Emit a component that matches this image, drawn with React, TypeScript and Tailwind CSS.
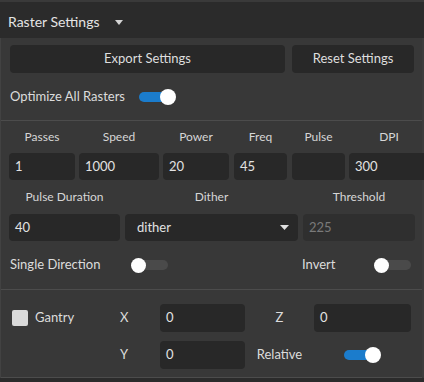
import React from "react";

function Toggle({ on }: { on: boolean }) {
  return (
    <div className="relative w-[37px] h-[16px] shrink-0">
      <div
        className={
          on
            ? "absolute left-0 right-[4px] top-[3px] h-[10px] rounded-full bg-[#1b7ccc]"
            : "absolute left-[3px] right-0 top-[3px] h-[10px] rounded-full bg-[#4a4a4a]"
        }
      />
      <div
        className={
          on
            ? "absolute right-0 top-0 w-[16px] h-[16px] rounded-full bg-white"
            : "absolute left-0 top-[0.5px] w-[15px] h-[15px] rounded-full bg-white"
        }
      />
    </div>
  );
}

function Field({ value, w, disabled }: { value: string; w: string; disabled?: boolean }) {
  return (
    <div
      className={
        "h-[27px] rounded-[4px] flex items-center px-[6px] text-[13px] shrink-0 " +
        w +
        (disabled ? " bg-[#2f2f2f] text-[#7a7a7a]" : " bg-[#282828] text-[#e2e2e2]")
      }
    >
      {value}
    </div>
  );
}

function Col({ label, value, w }: { label: string; value: string; w: string }) {
  return (
    <div className={"flex flex-col items-stretch shrink-0 " + w}>
      <div className="h-[16px] leading-[16px] text-center text-[12px] text-[#d6d6d6] mb-[8px] mt-[1px]">{label}</div>
      <Field value={value} w="w-full" />
    </div>
  );
}

export default function App() {
  return (
    <div
      className="w-[424px] h-[382px] overflow-hidden bg-[#2b2b2b] text-[#dcdcdc]"
      style={{ fontFamily: "Lato, 'Noto Sans', sans-serif" }}
    >
      {/* header */}
      <div className="h-[38px] border-t-2 border-[#3a3a3a] flex items-center pl-[8px] pt-[2px]">
        <span className="text-[14px] text-[#e4e4e4]">Raster Settings</span>
        <svg width="8" height="5" viewBox="0 0 8 5" className="ml-[15px] mt-[2px]">
          <polygon points="0,0 8,0 4,5" fill="#d4d4d4" />
        </svg>
      </div>

      {/* panel */}
      <div className="bg-[#383838] border-l border-[#424242] border-r-2 border-r-[#3c3c3c]">
        {/* section 1 */}
        <div className="pt-[7px] pb-[11px] pl-[9px] pr-[8px] border-b border-[#4c4c4c]">
          <div className="flex gap-[7px] h-[28px]">
            <div className="w-[275px] rounded-[4px] bg-[#282828] flex items-center justify-center text-[13px] text-[#dedede]">
              Export Settings
            </div>
            <div className="w-[122px] rounded-[4px] bg-[#282828] flex items-center justify-center text-[13px] text-[#dedede]">
              Reset Settings
            </div>
          </div>
          <div className="mt-[12px] h-[24px] flex items-center">
            <span className="text-[13px] text-[#dcdcdc] w-[129px]">Optimize All Rasters</span>
            <Toggle on />
          </div>
        </div>

        {/* section 2 */}
        <div className="pt-[7px] pb-[16px] pl-[8px] border-b border-[#4c4c4c]">
          <div className="flex w-[480px]">
            <Col label="Passes" value="1" w="w-[66px]" />
            <div className="w-[4px] shrink-0" />
            <Col label="Speed" value="1000" w="w-[80px]" />
            <div className="w-[4px] shrink-0" />
            <Col label="Power" value="20" w="w-[66px]" />
            <div className="w-[5px] shrink-0" />
            <Col label="Freq" value="45" w="w-[53px]" />
            <div className="w-[5px] shrink-0" />
            <Col label="Pulse" value="" w="w-[53px]" />
            <div className="w-[4px] shrink-0" />
            <Col label="DPI" value="300" w="w-[80px]" />
          </div>
          <div className="flex gap-[5px] mt-[9px]">
            <div className="flex flex-col w-[111px]">
              <div className="h-[16px] leading-[16px] text-center text-[12px] text-[#d6d6d6] mb-[9px]">Pulse Duration</div>
              <Field value="40" w="w-full" />
            </div>
            <div className="flex flex-col w-[173px]">
              <div className="h-[16px] leading-[16px] text-center text-[12px] text-[#d6d6d6] mb-[9px]">Dither</div>
              <div className="h-[27px] rounded-[4px] bg-[#282828] flex items-center justify-between pl-[12px] pr-[9px] text-[13px] text-[#e2e2e2]">
                <span>dither</span>
                <svg width="9" height="5" viewBox="0 0 9 5">
                  <polygon points="0,0 9,0 4.5,5" fill="#e0e0e0" />
                </svg>
              </div>
            </div>
            <div className="flex flex-col w-[112px]">
              <div className="h-[16px] leading-[16px] text-center text-[12px] text-[#d6d6d6] mb-[9px]">Threshold</div>
              <Field value="225" w="w-full" disabled />
            </div>
          </div>
          <div className="flex items-center h-[16px] mt-[16px] pl-[1px]">
            <span className="w-[121px] text-[13px] text-[#dcdcdc]">Single Direction</span>
            <Toggle on={false} />
            <span className="ml-[134px] w-[72px] text-[13px] text-[#dcdcdc]">Invert</span>
            <Toggle on={false} />
          </div>
        </div>

        {/* section 3 */}
        <div className="pt-[14px] pb-[8px] border-b border-[#4c4c4c]">
          <div className="flex items-center h-[28px]">
            <div className="w-[119px] pl-[11px] flex items-center">
              <div className="w-[16px] h-[16px] rounded-[2px] bg-[#d9d9d9]" />
              <span className="ml-[7px] text-[13px] text-[#dcdcdc]">Gantry</span>
            </div>
            <span className="w-[40px] text-[13px] text-[#dcdcdc]">X</span>
            <div className="w-[85px] h-[28px] rounded-[4px] bg-[#282828] flex items-center px-[6px] text-[13px] text-[#e2e2e2]">0</div>
            <div className="w-[69px] text-center text-[13px] text-[#dcdcdc]">Z</div>
            <div className="w-[97px] h-[28px] rounded-[4px] bg-[#282828] flex items-center px-[6px] text-[13px] text-[#e2e2e2]">0</div>
          </div>
          <div className="flex items-center h-[28px] mt-[9px]">
            <div className="w-[119px]" />
            <span className="w-[40px] text-[13px] text-[#dcdcdc]">Y</span>
            <div className="w-[85px] h-[28px] rounded-[4px] bg-[#282828] flex items-center px-[6px] text-[13px] text-[#e2e2e2]">0</div>
            <div className="w-[69px] text-center text-[13px] text-[#dcdcdc]">Relative</div>
            <div className="w-[97px] flex justify-center">
              <Toggle on />
            </div>
          </div>
        </div>
      </div>
    </div>
  );
}
